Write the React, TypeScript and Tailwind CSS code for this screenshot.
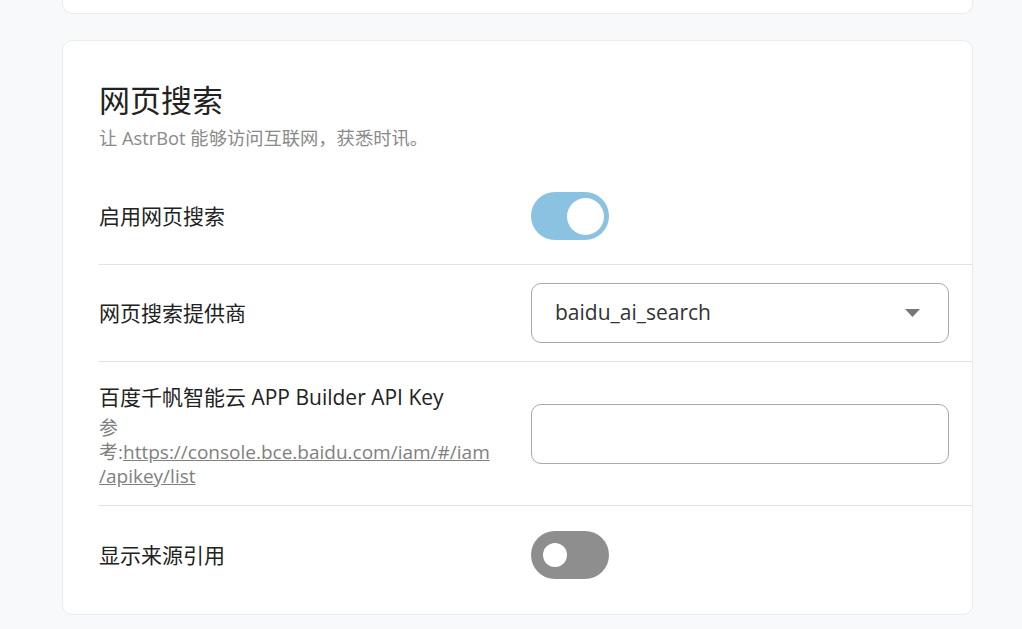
import type { ReactNode } from 'react';

const font = { fontFamily: '"Open Sans", "Noto Sans CJK SC", sans-serif' };

function Toggle({ on }: { readonly on: boolean }) {
  return (
    <div
      className={
        on
          ? 'flex h-[48px] w-[78px] items-center justify-end rounded-full bg-[#8bc2e1] pr-[5px]'
          : 'flex h-[48px] w-[78px] items-center justify-start rounded-full bg-[#8e8e8e] pl-[12px]'
      }
    >
      <div className={on ? 'h-[37px] w-[37px] rounded-full bg-white' : 'h-[24px] w-[24px] rounded-full bg-white'} />
    </div>
  );
}

function Row({
  label,
  hint,
  children,
  last,
}: Readonly<{ label: string; hint?: ReactNode; children: ReactNode; last?: boolean }>) {
  return (
    <div
      className={[
        'flex min-h-[97px] items-center',
        hint ? 'py-[17px]' : 'py-[18px]',
        last ? '' : 'border-b border-[#e3e3e3]',
      ].join(' ')}
    >
      <div className={hint ? 'w-[432px] shrink-0 pr-[30px] pt-[4px]' : 'w-[432px] shrink-0 pr-[30px]'}>
        <div className="text-[21px] leading-[28px] text-[#222]">{label}</div>
        {hint}
      </div>
      <div className="flex w-[418px] items-center">{children}</div>
    </div>
  );
}

export default function App() {
  return (
    <div className="min-h-[629px] bg-[#f8f9fb]" style={font}>
      <div className="ml-[62px] h-[14px] w-[911px] rounded-b-[10px] border-x border-b border-[#ebebeb] bg-white" />

      <div className="ml-[62px] mt-[26px] w-[911px] rounded-[10px] border border-[#ebebeb] bg-white pb-[11px] pl-[36px] pt-[38px]">
        <h2 className="text-[31px] leading-[42px] text-[#222]">网页搜索</h2>
        <p className="mt-[5px] text-[18.3px] leading-[24px] text-[#8a8a8a]">让 AstrBot 能够访问互联网，获悉时讯。</p>

        <div className="mt-[18px]">
          <Row label="启用网页搜索">
            <Toggle on />
          </Row>

          <Row label="网页搜索提供商">
            <div className="flex h-[60px] w-full items-center justify-between rounded-[10px] border border-[#a9a9a9] pl-[23px] pr-[28px]">
              <span className="text-[21px] text-[#333]">baidu_ai_search</span>
              <svg width="15" height="8" viewBox="0 0 15 8">
                <path d="M0 0 L15 0 L7.5 8 Z" fill="#777" />
              </svg>
            </div>
          </Row>

          <Row
            label="百度千帆智能云 APP Builder API Key"
            hint={
              <div className="mt-[5px] whitespace-nowrap text-[19px] leading-[24px] text-[#808080]">
                参
                <br />
                考:
                <a href="#" className="underline">
                  https://console.bce.baidu.com/iam/#/iam
                  <br />
                  /apikey/list
                </a>
              </div>
            }
          >
            <input className="h-[60px] w-full rounded-[10px] border border-[#a9a9a9] px-[23px] text-[21px] outline-none" />
          </Row>

          <Row label="显示来源引用" last>
            <Toggle on={false} />
          </Row>
        </div>
      </div>
    </div>
  );
}
